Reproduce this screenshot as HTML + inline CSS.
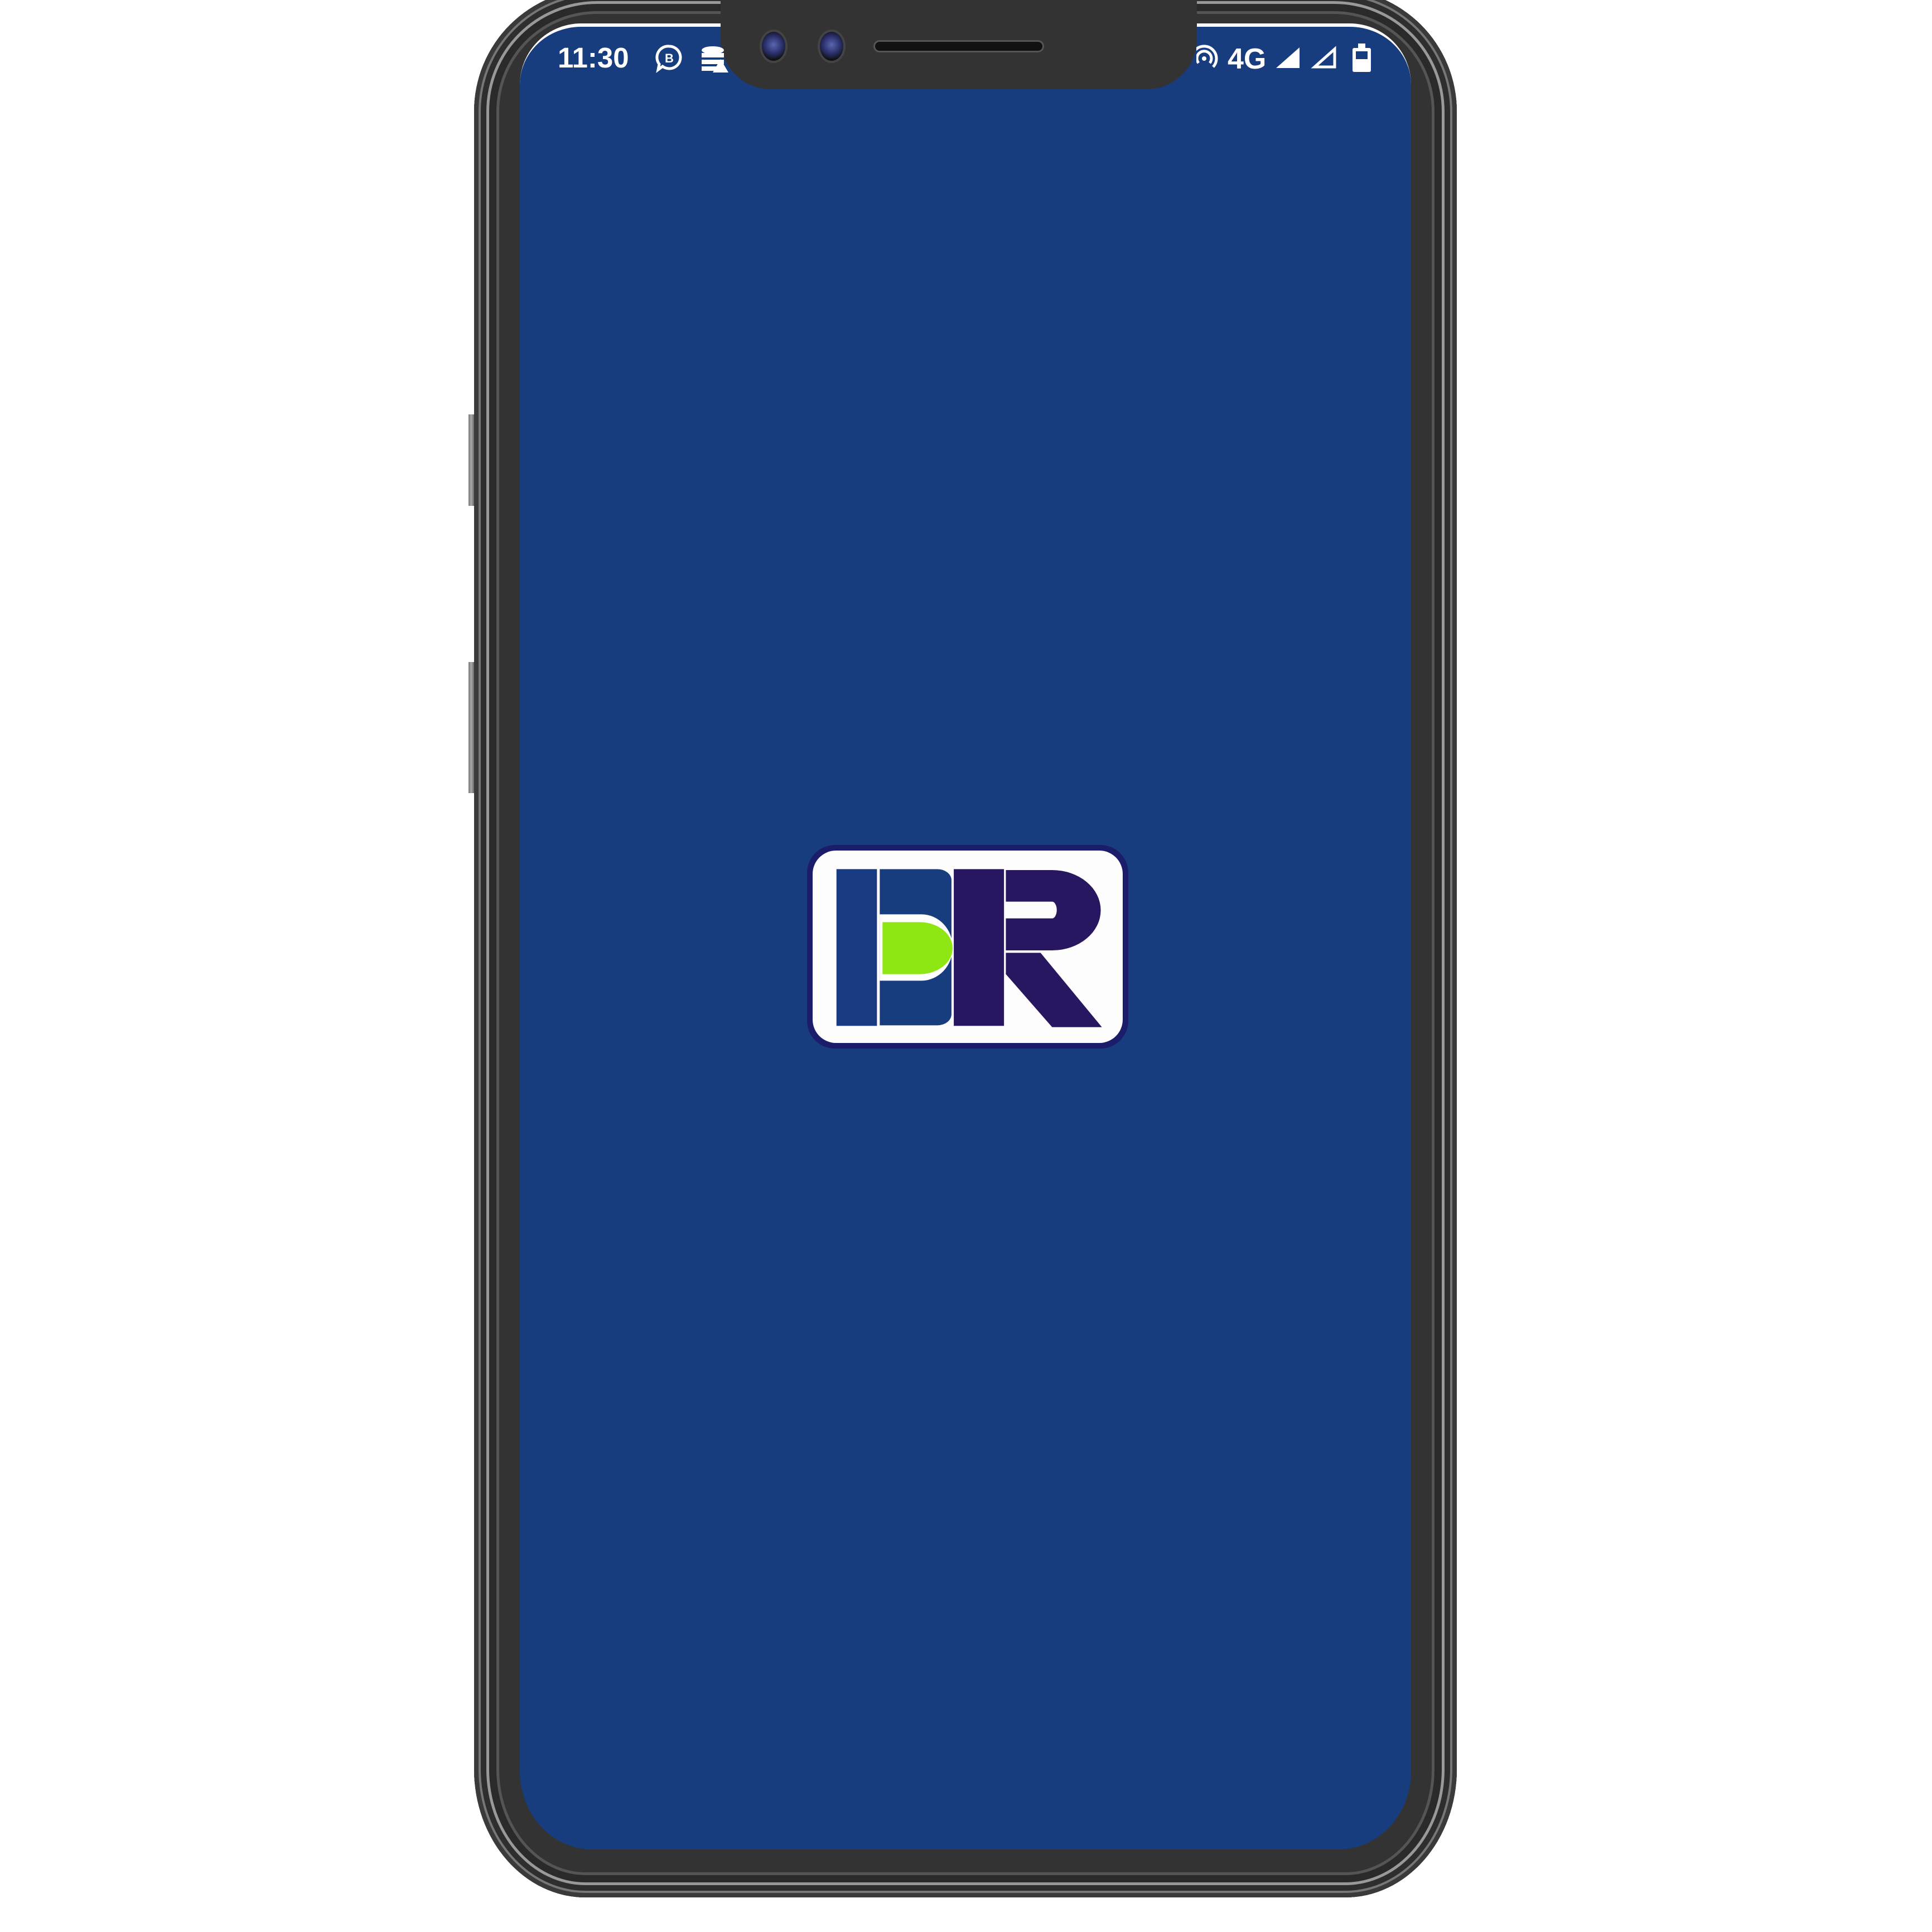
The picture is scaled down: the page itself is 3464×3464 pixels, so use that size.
<!DOCTYPE html>
<html><head><meta charset="utf-8"><style>
html,body{margin:0;padding:0;background:#fff;width:3464px;height:3464px;overflow:hidden;position:relative;font-family:"Liberation Sans",sans-serif}
.abs{position:absolute}
.phone{left:850px;top:-20px;width:1762px;height:3422px;border-radius:220px 220px 200px 200px/220px 220px 230px 230px;background:#333;box-shadow:inset 0 0 0 8px #3a3a3a,inset 0 0 0 12px #777,inset 0 0 0 22px #2e2e2e,inset 0 0 0 27px #999,inset 0 0 0 40px #2a2a2a,inset 0 0 0 45px #555,inset 0 0 0 58px #333}
.screen{left:932px;top:42px;width:1598px;height:3274px;background:#173d7e;border-radius:110px 110px 130px 130px/110px 110px 140px 140px;border-top:6px solid #fff;box-sizing:border-box}
.btn{left:840px;width:10px;background:linear-gradient(90deg,#777,#aaa,#666)}
.notch{left:1292px;top:0;width:854px;height:160px;background:#333;border-radius:0 0 90px 90px}
.cam{width:50px;height:60px;border-radius:50%;background:radial-gradient(circle at 50% 45%,#5a66b0 0,#2a2f6a 45%,#111 75%);border:4px solid #444;box-sizing:border-box}
.spk{left:1566px;top:72px;width:306px;height:22px;border-radius:11px;background:#111;border:3px solid #555;box-sizing:border-box}
.st{color:#fff;font-size:51px;line-height:52px;font-weight:bold}
</style></head><body>
<div class="abs btn" style="top:743px;height:164px"></div>
<div class="abs btn" style="top:1187px;height:235px"></div>
<div class="abs phone"></div>
<div class="abs screen"></div>
<div class="abs notch"></div>
<div class="abs cam" style="left:1362px;top:53px"></div>
<div class="abs cam" style="left:1466px;top:53px"></div>
<div class="abs spk"></div>
<div class="abs st" style="left:1000px;top:78px">11:30</div>
<svg class="abs" style="left:1170px;top:78px" width="140" height="55" viewBox="0 0 140 55">
<path d="M30 5a20 20 0 1 1-12 36l-8 6 2-10A20 20 0 0 1 30 5z" fill="none" stroke="#fff" stroke-width="5"/>
<text x="30" y="34" fill="#fff" font-size="22" font-weight="bold" text-anchor="middle" font-family="Liberation Sans">B</text>
<ellipse cx="108" cy="12" rx="20" ry="7" fill="#fff"/><rect x="88" y="17" width="40" height="8" fill="#fff"/><rect x="88" y="29" width="40" height="8" fill="#fff"/><rect x="88" y="41" width="34" height="8" fill="#fff"/>
<path d="M108 52l14-24 14 24z" fill="#fff"/>
</svg>
<svg class="abs" style="left:2145px;top:78px" width="320" height="55" viewBox="0 0 320 55">
<circle cx="14" cy="27" r="4" fill="#fff"/>
<path d="M4 35a13 13 0 1 1 20 0M-2 42a22 22 0 1 1 32 0" fill="none" stroke="#fff" stroke-width="5"/>
<text x="56" y="45" fill="#fff" font-size="52" font-weight="bold" font-family="Liberation Sans">4G</text>
<path d="M143 44L185 7v37z" fill="#fff"/>
<path d="M212 42L248 10v32z" fill="none" stroke="#fff" stroke-width="5"/>
<rect x="280" y="8" width="33" height="43" rx="3" fill="#fff"/><rect x="290" y="0" width="13" height="9" fill="#fff"/>
<rect x="286" y="14" width="21" height="14" fill="#173d7e"/>
</svg>
<div class="abs" style="left:1447px;top:1515px;width:576px;height:365px;background:#1b1c6a;border-radius:50px"></div>
<div class="abs" style="left:1457px;top:1525px;width:556px;height:345px;background:#fdfdfd;border-radius:42px"></div>
<svg class="abs" style="left:1457px;top:1525px" width="556" height="345" viewBox="90 75 1340 1035" preserveAspectRatio="none">
<rect x="193" y="175" width="175" height="843" fill="#173a80"/>
<path d="M380 175h250a60 60 0 0 1 60 60v720a60 60 0 0 1-60 60H380z" fill="#173d7e"/>
<path d="M380 418h180a135 178 0 0 1 0 357H380z" fill="#fff"/>
<path d="M392 460h160a143 140 0 0 1 0 280H392z" fill="#8ee612"/>
<rect x="700" y="175" width="217" height="843" fill="#271660"/>
<path d="M925 180h200a210 216 0 0 1 0 432H925V440h200a20 45 0 0 0 0-90H925z" fill="#271660"/>
<path d="M925 625h150l265 400h-215L925 740z" fill="#271660"/>
</svg>
</body></html>
